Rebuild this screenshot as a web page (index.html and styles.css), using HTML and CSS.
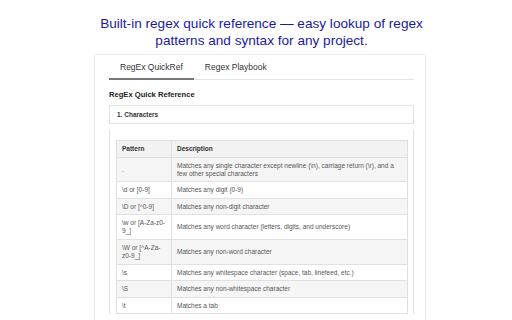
FILE: index.html
```html
<!DOCTYPE html>
<html lang="en">
<head>
  <meta charset="UTF-8" />
  <meta name="viewport" content="width=device-width, initial-scale=1.0"/>
  <title>RegEx QuickRef</title>
  <link rel="stylesheet" href="styles.css">
</head>
<body>

  <h1 class="promo-title">Built-in regex quick reference — easy lookup of regex<br />patterns and syntax for any project.</h1>

  <div class="panel">
    <nav class="tabs">
      <span class="tab active">RegEx QuickRef</span>
      <span class="tab">Regex Playbook</span>
    </nav>

    <h2 class="ref-title">RegEx Quick Reference</h2>

    <div class="section">
      <div class="section-head">1. Characters</div>
      <div class="section-body">
        <table class="ref-table">
          <thead>
            <tr><th class="col-pattern">Pattern</th><th>Description</th></tr>
          </thead>
          <tbody>
            <tr><td>.</td><td>Matches any single character except newline (\n), carriage return (\r), and a few other special characters</td></tr>
            <tr><td>\d or [0-9]</td><td>Matches any digit (0-9)</td></tr>
            <tr><td>\D or [^0-9]</td><td>Matches any non-digit character</td></tr>
            <tr><td>\w or [A-Za-z0-9_]</td><td>Matches any word character (letters, digits, and underscore)</td></tr>
            <tr><td>\W or [^A-Za-z0-9_]</td><td>Matches any non-word character</td></tr>
            <tr><td>\s</td><td>Matches any whitespace character (space, tab, linefeed, etc.)</td></tr>
            <tr><td>\S</td><td>Matches any non-whitespace character</td></tr>
            <tr><td>\t</td><td>Matches a tab</td></tr>
          </tbody>
        </table>
      </div>
    </div>
  </div>

</body>
</html>
```

FILE: styles.css
```css
body {
  margin: 0;
  font-family: 'Liberation Sans', Arial, sans-serif;
  background-color: #ffffff;
  height: 320px;
  overflow: hidden;
}

.promo-title {
  margin: 0;
  padding: 15px 0 0 11px;
  font-size: 13.6px;
  line-height: 17px;
  font-weight: normal;
  text-align: center;
  color: #1a1aa0;
}

.panel {
  width: 305px;
  margin: 6px 0 0 95px;
  padding: 0 11px 0 14px;
  height: 280px;
  box-shadow: 0 0 3px rgba(0,0,0,0.18);
  background-color: white;
}

.tabs {
  display: flex;
  border-bottom: 1px solid #e3e3e3;
  padding-top: 5px;
}

.tab {
  padding: 2px 11px 5px;
  font-size: 8.5px;
  line-height: 11px;
  color: #333;
  border-bottom: 2px solid transparent;
  margin-bottom: -1px;
}

.tab.active {
  border-bottom-color: #777;
}

.ref-title {
  margin: 10px 0 6px;
  font-size: 7.6px;
  line-height: 9px;
  color: #222;
}

.section-head {
  border: 1px solid #e2e2e2;
  padding: 5px 7px;
  font-size: 6.5px;
  line-height: 7px;
  font-weight: bold;
  color: #333;
}

.section-body {
  margin-top: 6px;
  border-left: 1px solid #e2e2e2;
  border-right: 1px solid #e2e2e2;
  padding: 10px 5px 0 6px;
}

.ref-table {
  width: 100%;
  border-collapse: collapse;
  font-size: 6.5px;
  line-height: 8px;
  color: #555;
}

.ref-table th,
.ref-table td {
  border: 1px solid #e0e0e0;
  padding: 4px 5px 3.6px;
  text-align: left;
  vertical-align: middle;
}

.ref-table th {
  background-color: #f2f2f2;
  color: #333;
}

.col-pattern {
  width: 44px;
}

.ref-table tbody tr:nth-child(odd) {
  background-color: #f5f5f5;
}
```
